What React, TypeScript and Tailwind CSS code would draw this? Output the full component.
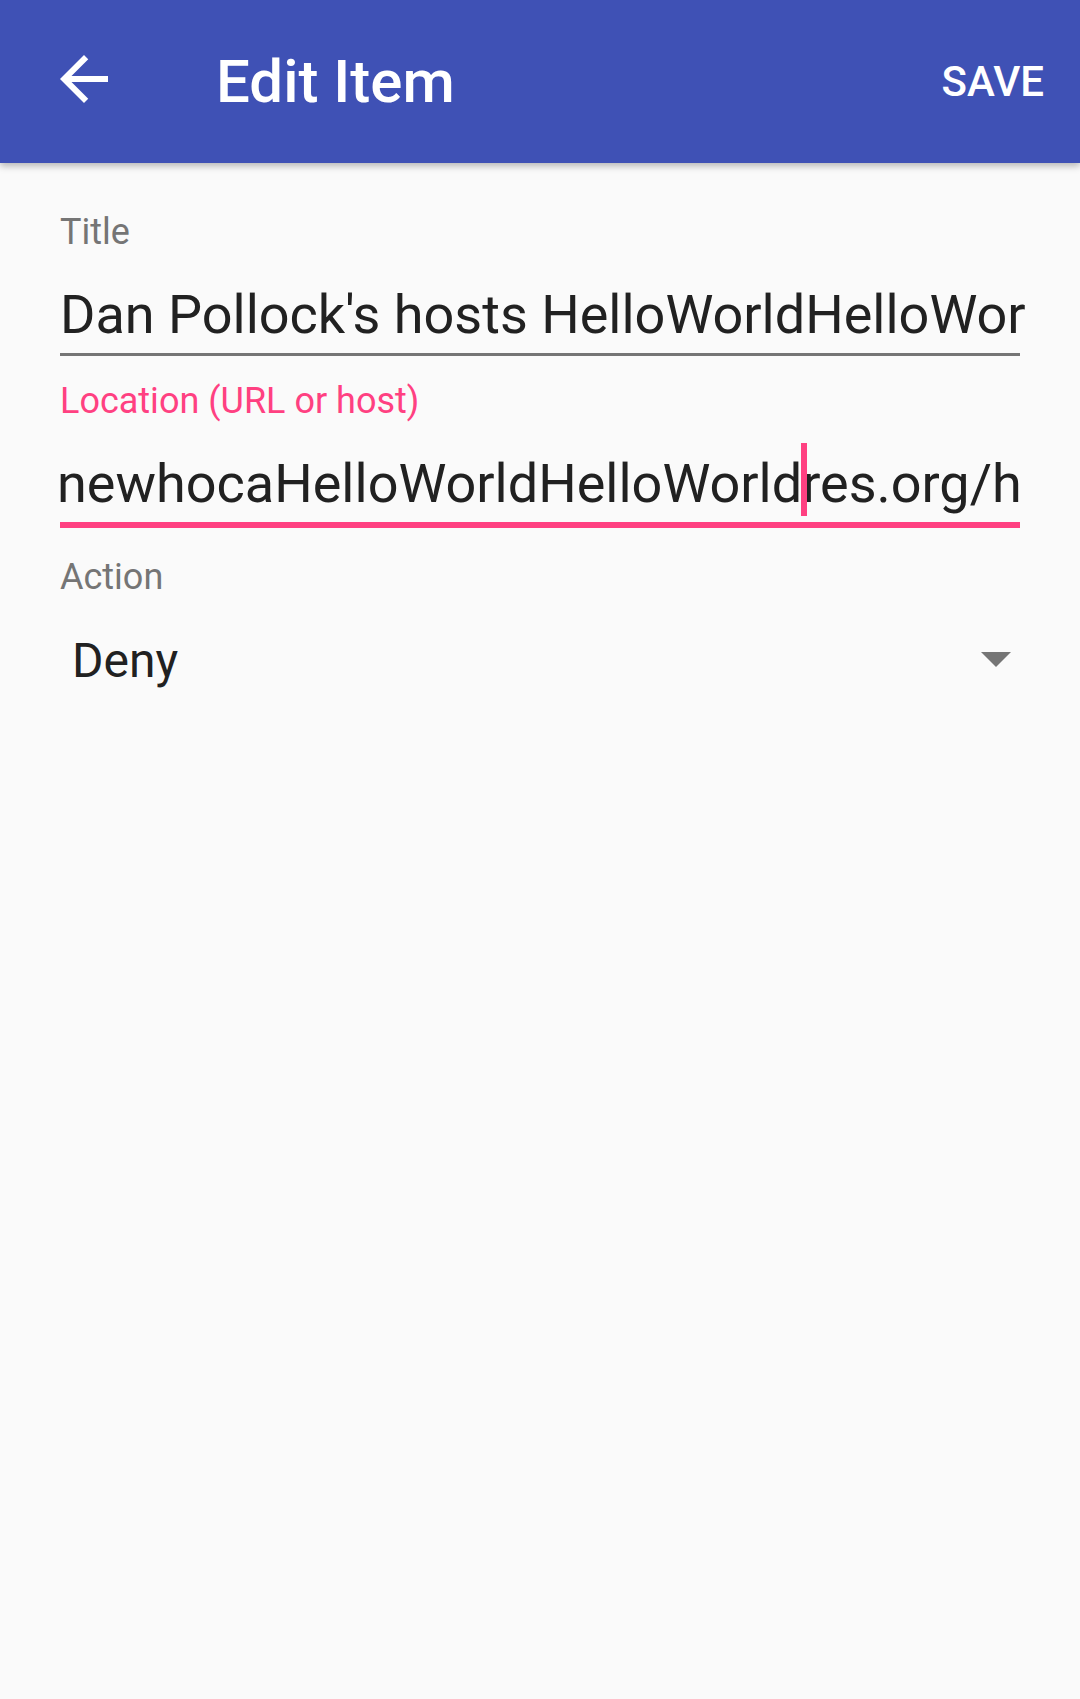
import React from "react";

export default function App() {
  return (
    <div
      className="w-[1080px] h-[1699px] bg-[#fafafa] flex flex-col overflow-hidden"
      style={{ fontFamily: "Roboto, 'Noto Sans', sans-serif" }}
    >
      {/* App bar */}
      <div className="relative z-10 h-[163px] shrink-0 bg-[#3f51b5] flex items-center shadow-[0_3px_7px_rgba(0,0,0,0.28)]">
        <svg
          className="ml-[48px] -mt-[6px] w-[72px] h-[72px] shrink-0"
          viewBox="0 0 24 24"
          fill="#ffffff"
        >
          <path d="M20 11H7.83l5.59-5.59L12 4l-8 8 8 8 1.41-1.41L7.83 13H20v-2z" />
        </svg>
        <div className="ml-[96px] text-[60px] leading-[60px] font-medium text-white">
          Edit Item
        </div>
        <div className="ml-auto mr-[36px] text-[42px] leading-[42px] font-medium text-white">
          SAVE
        </div>
      </div>

      {/* Content */}
      <div className="flex flex-col pl-[60px] w-[1020px]">
        <div className="mt-[51px] text-[36px] leading-[36px] text-[#757575]">Title</div>
        <div className="mt-[38px] text-[54px] leading-[54px] text-[#212121] whitespace-nowrap">
          Dan Pollock's hosts HelloWorldHelloWor
        </div>
        <div className="mt-[11px] h-[3px] bg-[#757575]" />

        <div className="mt-[27px] text-[36px] leading-[36px] text-[#ff4081]">
          Location (URL or host)
        </div>
        <div className="mt-[38px] -ml-[3px] text-[54px] leading-[54px] text-[#212121] whitespace-nowrap">
          newhocaHelloWorldHelloWorld
          <span className="relative inline-block w-0 h-[54px] align-top">
            <span className="absolute left-[-1px] top-[-14px] w-[6px] h-[73px] bg-[#ff4081]" />
          </span>
          res.org/h
        </div>
        <div className="mt-[11px] h-[6px] bg-[#ff4081]" />

        <div className="mt-[31px] text-[36px] leading-[36px] text-[#757575]">Action</div>
        <div className="mt-[42px] flex items-center h-[48px]">
          <div className="ml-[12px] text-[48px] leading-[48px] text-[#212121]">Deny</div>
          <svg
            className="ml-auto mr-[9px] -mt-[3px] w-[30px] h-[15px]"
            viewBox="0 0 30 15"
            fill="#757575"
          >
            <path d="M0 0h30L15 15z" />
          </svg>
        </div>
      </div>
    </div>
  );
}
